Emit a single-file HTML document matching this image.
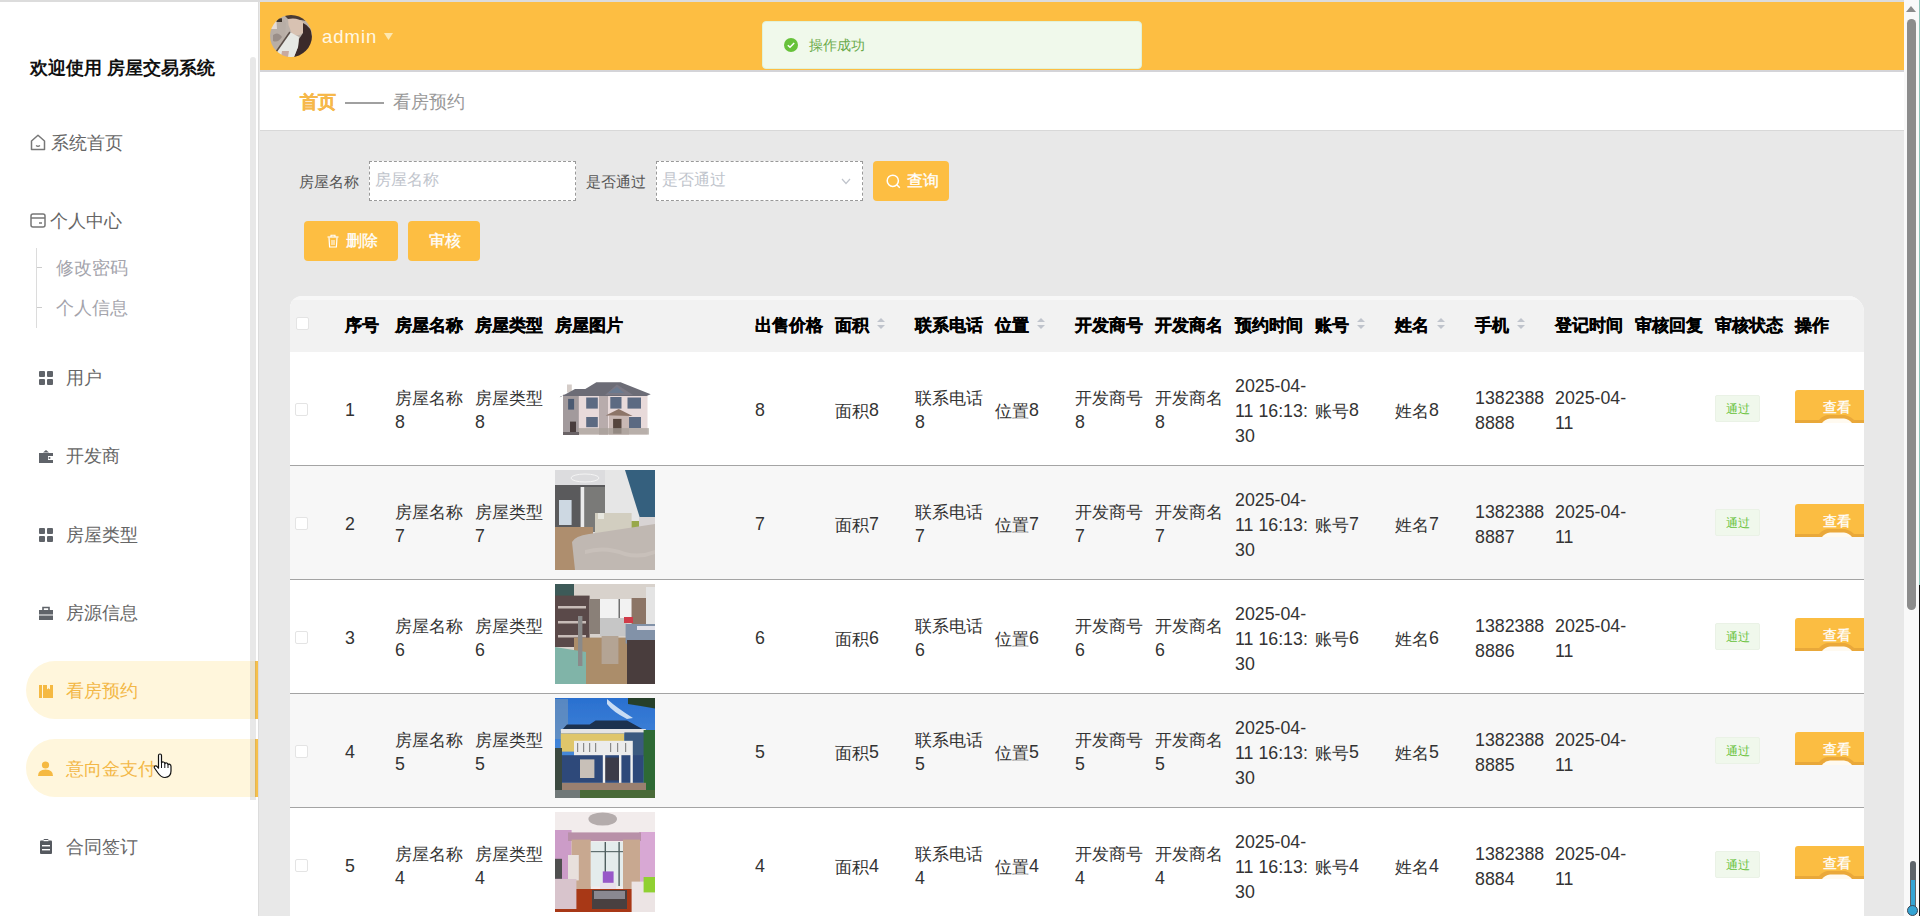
<!DOCTYPE html><html><head><meta charset="utf-8"><style>
*{box-sizing:border-box;margin:0;padding:0}
html,body{width:1920px;height:916px;overflow:hidden}
body{position:relative;background:#e8e8e8;font-family:"Liberation Sans",sans-serif;color:#333}
.abs{position:absolute}
.t{position:absolute;white-space:nowrap;line-height:1}
#topline{left:0;top:0;width:1920px;height:2px;background:#dcdcdc}
#side{left:0;top:2px;width:258px;height:914px;background:#fff}
#sideedge{left:258px;top:2px;width:1px;height:914px;background:#dcdcdc}
#sidescroll{left:250px;top:57px;width:6px;height:743px;border-radius:3px 3px 0 0;background:rgba(140,140,140,0.2)}
.menu{position:absolute;left:30px;font-size:18px;color:#666;white-space:nowrap;line-height:1}
.pill{position:absolute;left:26px;width:232px;height:58px;border-radius:29px 0 0 29px;background:#fff6dc;border-right:3px solid #f7c04a}
#header{left:260px;top:2px;width:1644px;height:68px;background:#fdbe42}
#hline{left:260px;top:70px;width:1644px;height:2px;background:#d4d4d8}
#crumb{left:260px;top:72px;width:1644px;height:58px;background:#fff}
#cline{left:260px;top:130px;width:1644px;height:1px;background:#d8d8d8}
#vscroll{left:1904px;top:0;width:16px;height:916px;background:#f9f9f9}
.btn{position:absolute;height:40px;top:0;background:#fdbe42;border-radius:4px;color:#fff;font-size:16px}
.th{position:absolute;top:317.5px;font-size:16.6px;font-weight:bold;color:#000;white-space:nowrap;line-height:1;-webkit-text-stroke:0.35px #000}
.td{position:absolute;font-size:16.8px;color:#333;line-height:24px;white-space:nowrap}
.n{font-size:17.8px}
.c{position:relative;top:1px}
.cb{position:absolute;left:296px;width:13px;height:13px;background:#fff;border:1px solid #e4e4e4;border-radius:2px}
.sort{position:absolute;width:10px;height:12px}
.tag{position:absolute;left:1715px;width:45px;height:27px;background:#f0f8ec;border:1px solid #eaf2e6;border-radius:2px;color:#67c23a;font-size:12px;line-height:27px;text-align:center}
</style></head><body><div id="topline" class="abs"></div>
<div id="side" class="abs"></div>
<div id="sideedge" class="abs"></div>
<div class="t" style="left:30px;top:59px;font-size:18px;font-weight:bold;color:#111">欢迎使用 房屋交易系统</div>
<div class="pill" style="top:661px"></div>
<div class="pill" style="top:739px"></div>
<div id="sidescroll" class="abs"></div>
<svg class="abs" style="left:30px;top:134px" width="16" height="17" viewBox="0 0 16 17"><path d="M1.5 7 L8 1.2 L14.5 7 V15.5 H1.5 Z" fill="none" stroke="#777" stroke-width="1.5" stroke-linejoin="round"/><path d="M6 11.5 Q8 13 10 11.5" fill="none" stroke="#777" stroke-width="1.3"/></svg>
<div class="menu" style="left:51px;top:134px">系统首页</div>
<svg class="abs" style="left:30px;top:213px" width="16" height="15" viewBox="0 0 16 15"><rect x="1" y="1" width="14" height="13" rx="2" fill="none" stroke="#777" stroke-width="1.5"/><line x1="1" y1="5" x2="15" y2="5" stroke="#777" stroke-width="1.5"/><line x1="9" y1="10" x2="12" y2="10" stroke="#777" stroke-width="1.5"/></svg>
<div class="menu" style="left:50px;top:212px">个人中心</div>
<div class="abs" style="left:36px;top:248px;width:1px;height:80px;background:#dcdcdc"></div>
<div class="abs" style="left:37px;top:267px;width:5px;height:1px;background:#ccc"></div>
<div class="abs" style="left:37px;top:307px;width:5px;height:1px;background:#ccc"></div>
<div class="menu" style="left:56px;top:259px;color:#a4a4ac">修改密码</div>
<div class="menu" style="left:56px;top:299px;color:#a4a4ac">个人信息</div>
<svg class="abs" style="left:39px;top:371px" width="14" height="14" viewBox="0 0 14 14"><rect x="0" y="0" width="6" height="6" rx="1" fill="#5f6369"/><rect x="8" y="0" width="6" height="6" rx="1" fill="#5f6369"/><rect x="0" y="8" width="6" height="6" rx="1" fill="#5f6369"/><rect x="8" y="8" width="6" height="6" rx="1" fill="#5f6369"/></svg>
<div class="menu" style="left:66px;top:369px">用户</div>
<svg class="abs" style="left:39px;top:449px" width="14" height="14" viewBox="0 0 14 14"><path d="M7 1 L10 3.5 H4 Z" fill="#5f6369"/><rect x="0" y="4" width="14" height="10" fill="#5f6369"/><rect x="9" y="7" width="5" height="4" fill="#fff"/><circle cx="10.5" cy="9" r="1" fill="#5f6369"/></svg>
<div class="menu" style="left:66px;top:447px">开发商</div>
<svg class="abs" style="left:39px;top:528px" width="14" height="14" viewBox="0 0 14 14"><rect x="0" y="0" width="6" height="6" rx="1" fill="#5f6369"/><rect x="8" y="0" width="6" height="6" rx="1" fill="#5f6369"/><rect x="0" y="8" width="6" height="6" rx="1" fill="#5f6369"/><rect x="8" y="8" width="6" height="6" rx="1" fill="#5f6369"/></svg>
<div class="menu" style="left:66px;top:526px">房屋类型</div>
<svg class="abs" style="left:39px;top:606px" width="14" height="14" viewBox="0 0 14 14"><path d="M4 4 V1.5 H10 V4" fill="none" stroke="#5f6369" stroke-width="1.6"/><rect x="0" y="4" width="14" height="4.5" fill="#5f6369"/><rect x="0" y="9.5" width="14" height="4.5" fill="#5f6369"/></svg>
<div class="menu" style="left:66px;top:604px">房源信息</div>
<svg class="abs" style="left:39px;top:684px" width="14" height="14" viewBox="0 0 14 14"><rect x="0" y="1" width="3" height="13" fill="#f5b942"/><rect x="4" y="1" width="10" height="13" fill="#f5b942"/><path d="M8 1 V5.5 L9.5 4.3 L11 5.5 V1 Z" fill="#fff6dc"/></svg>
<div class="menu" style="left:66px;top:682px;color:#f3b847">看房预约</div>
<svg class="abs" style="left:38px;top:761px" width="15" height="15" viewBox="0 0 15 15"><circle cx="7.5" cy="4" r="3.6" fill="#f5b942"/><path d="M0 15 Q0 8.5 7.5 8.5 Q15 8.5 15 15 Z" fill="#f5b942"/></svg>
<div class="menu" style="left:66px;top:760px;color:#f3b847">意向金支付</div>
<svg class="abs" style="left:40px;top:839px" width="12" height="15" viewBox="0 0 12 15"><rect x="0" y="1.5" width="12" height="13.5" rx="1" fill="#55595f"/><rect x="3.5" y="0" width="5" height="2.5" rx="1" fill="#55595f"/><rect x="3.5" y="1" width="5" height="1.2" fill="#fff"/><rect x="2" y="6" width="8" height="1.4" fill="#fff"/><rect x="2" y="10" width="8" height="1.4" fill="#fff"/></svg>
<div class="menu" style="left:66px;top:838px">合同签订</div>
<div id="header" class="abs"></div>
<div id="hline" class="abs"></div>
<div id="crumb" class="abs"></div>
<div id="cline" class="abs"></div>
<svg class="abs" style="left:270px;top:15px" width="42" height="42" viewBox="0 0 42 42">
<defs><clipPath id="av"><circle cx="21" cy="21" r="21"/></clipPath><filter id="bl" x="-10%" y="-10%" width="120%" height="120%"><feGaussianBlur stdDeviation="0.7"/></filter></defs>
<g clip-path="url(#av)"><g filter="url(#bl)">
<rect width="42" height="42" fill="#bcb2aa"/>
<path d="M0 6 L12 2 L16 8 L14 34 L0 34 Z" fill="#b8aea6"/>
<path d="M1 7 L6.5 6 L7 14 L1 14 Z" fill="#e6dcd6"/>
<path d="M6.5 3.3 L12 3.3 L12 7 L6.5 7 Z" fill="#3a302c"/>
<path d="M3 20 Q8 16 12 22 Q8 28 3 26 Z" fill="#9a8e88"/>
<path d="M14 0 H34 L36 6 L31 5 L18 4 Z" fill="#4a3a34"/>
<path d="M18 4 Q28 2 34 8 L33 18 Q28 22 22 19 L18.5 10 Z" fill="#d8c2b2"/>
<path d="M33 8 Q42 12 42 22 V42 H24 L28 32 L29 24 L33 18 Z" fill="#3a2c2a"/>
<path d="M6 37 L20 17 L29 22 L28 32 L24 42 H8 Z" fill="#e6e8e4"/>
<path d="M6 37 L20 17" stroke="#5a4e48" stroke-width="1.6"/>
<path d="M12 36 H19 L18 42 H11 Z" fill="#c8aaa0"/>
</g></g></svg>
<div class="t" style="left:322px;top:28px;font-size:18.5px;letter-spacing:1px;color:#fff8e4">admin</div>
<svg class="abs" style="left:384px;top:33px" width="9" height="7" viewBox="0 0 9 7"><path d="M0 0 H9 L4.5 7 Z" fill="#fde8b0"/></svg>
<div class="abs" style="left:762px;top:21px;width:380px;height:48px;background:#f0f9eb;border:1px solid #e1f3d8;border-radius:4px"></div>
<svg class="abs" style="left:784px;top:38px" width="14" height="14" viewBox="0 0 14 14"><circle cx="7" cy="7" r="7" fill="#67c23a"/><path d="M3.8 7.2 L6 9.3 L10.2 5" fill="none" stroke="#fff" stroke-width="1.5"/></svg>
<div class="t" style="left:809px;top:39px;font-size:13.5px;color:#6aaa4a">操作成功</div>
<div class="t" style="left:300px;top:93px;font-size:18px;font-weight:bold;color:#f6b84a;-webkit-text-stroke:0.35px #f6b84a">首页</div>
<div class="abs" style="left:345px;top:102px;width:39px;height:2px;background:#a0a0a0"></div>
<div class="t" style="left:393px;top:93px;font-size:18px;color:#999">看房预约</div>
<div class="t" style="left:299px;top:174px;font-size:15px;color:#555">房屋名称</div>
<div class="abs" style="left:369px;top:161px;width:207px;height:40px;background:#fff;border:1px dashed #999"></div>
<div class="t" style="left:375px;top:172px;font-size:16px;color:#c0c4cc">房屋名称</div>
<div class="t" style="left:586px;top:174px;font-size:15px;color:#555">是否通过</div>
<div class="abs" style="left:656px;top:161px;width:207px;height:40px;background:#fff;border:1px dashed #999"></div>
<div class="t" style="left:662px;top:172px;font-size:16px;color:#c0c4cc">是否通过</div>
<svg class="abs" style="left:841px;top:178px" width="10" height="7" viewBox="0 0 10 7"><path d="M1 1 L5 5.5 L9 1" fill="none" stroke="#c0c4cc" stroke-width="1.2"/></svg>
<div class="abs" style="left:873px;top:161px;width:76px;height:40px;background:#fdbe42;border-radius:4px"></div>
<svg class="abs" style="left:886px;top:174px" width="15" height="15" viewBox="0 0 15 15"><circle cx="6.8" cy="6.8" r="5.6" fill="none" stroke="#fff" stroke-width="1.5"/><path d="M10.8 10.8 L13.8 13.8" stroke="#fff" stroke-width="1.5"/></svg>
<div class="t" style="left:907px;top:173px;font-size:16px;color:#fff;-webkit-text-stroke:0.3px #fff">查询</div>
<div class="abs" style="left:304px;top:221px;width:94px;height:40px;background:#fdbe42;border-radius:4px"></div>
<svg class="abs" style="left:327px;top:234px" width="12" height="14" viewBox="0 0 12 14"><path d="M0.5 3 H11.5" stroke="#fff" stroke-width="1.2"/><path d="M4 3 V1.2 H8 V3" fill="none" stroke="#fff" stroke-width="1.1"/><path d="M2 3.5 L2.6 13 H9.4 L10 3.5" fill="none" stroke="#fff" stroke-width="1.2"/><path d="M5 6 V11 M7 6 V11" stroke="#fff" stroke-width="1"/></svg>
<div class="t" style="left:346px;top:233px;font-size:16px;color:#fff;-webkit-text-stroke:0.3px #fff">删除</div>
<div class="abs" style="left:408px;top:221px;width:72px;height:40px;background:#fdbe42;border-radius:4px"></div>
<div class="t" style="left:429px;top:233px;font-size:16px;color:#fff;-webkit-text-stroke:0.3px #fff">审核</div>
<div class="abs" style="left:290px;top:296px;width:1574px;height:620px;background:#fff;border-radius:12px 16px 0 0;overflow:hidden"><div class="abs" style="left:0;top:0;width:1574px;height:56px;background:#f2f2f2"></div><div class="abs" style="left:0;top:0;width:1574px;height:4px;background:#f7f7f7"></div></div>
<div class="cb" style="top:317px"></div>
<div class="th" style="left:345px">序号</div>
<div class="th" style="left:395px">房屋名称</div>
<div class="th" style="left:475px">房屋类型</div>
<div class="th" style="left:555px">房屋图片</div>
<div class="th" style="left:755px">出售价格</div>
<div class="th" style="left:835px">面积</div>
<svg class="sort" style="left:876px;top:318px" viewBox="0 0 10 12"><path d="M1 4 L5 0 L9 4 Z" fill="#c0c4cc"/><path d="M1 7 L5 11 L9 7 Z" fill="#c0c4cc"/></svg>
<div class="th" style="left:915px">联系电话</div>
<div class="th" style="left:995px">位置</div>
<svg class="sort" style="left:1036px;top:318px" viewBox="0 0 10 12"><path d="M1 4 L5 0 L9 4 Z" fill="#c0c4cc"/><path d="M1 7 L5 11 L9 7 Z" fill="#c0c4cc"/></svg>
<div class="th" style="left:1075px">开发商号</div>
<div class="th" style="left:1155px">开发商名</div>
<div class="th" style="left:1235px">预约时间</div>
<div class="th" style="left:1315px">账号</div>
<svg class="sort" style="left:1356px;top:318px" viewBox="0 0 10 12"><path d="M1 4 L5 0 L9 4 Z" fill="#c0c4cc"/><path d="M1 7 L5 11 L9 7 Z" fill="#c0c4cc"/></svg>
<div class="th" style="left:1395px">姓名</div>
<svg class="sort" style="left:1436px;top:318px" viewBox="0 0 10 12"><path d="M1 4 L5 0 L9 4 Z" fill="#c0c4cc"/><path d="M1 7 L5 11 L9 7 Z" fill="#c0c4cc"/></svg>
<div class="th" style="left:1475px">手机</div>
<svg class="sort" style="left:1516px;top:318px" viewBox="0 0 10 12"><path d="M1 4 L5 0 L9 4 Z" fill="#c0c4cc"/><path d="M1 7 L5 11 L9 7 Z" fill="#c0c4cc"/></svg>
<div class="th" style="left:1555px">登记时间</div>
<div class="th" style="left:1635px">审核回复</div>
<div class="th" style="left:1715px">审核状态</div>
<div class="th" style="left:1795px">操作</div>
<div class="abs" style="left:290px;top:352px;width:1574px;height:113px;background:#fff"></div>
<div class="abs" style="left:290px;top:465px;width:1574px;height:1px;background:#a4a4a4"></div>
<div class="cb" style="top:403.0px;left:295px"></div>
<div class="td" style="left:345px;top:398.0px"><span class="n">1</span></div>
<div class="td" style="left:395px;top:386.0px"><span class="c">房屋名称</span><br><span class="n">8</span></div>
<div class="td" style="left:475px;top:386.0px"><span class="c">房屋类型</span><br><span class="n">8</span></div>
<svg class="abs" style="left:555px;top:356px" width="100" height="100" viewBox="0 0 100 100"><defs><filter id="b0" x="0" y="0" width="100%" height="100%"><feGaussianBlur stdDeviation="0.6" edgeMode="duplicate"/></filter></defs><g filter="url(#b0)"><rect width="100" height="100" fill="#fff"/>
<rect x="12" y="28.5" width="4.8" height="8" fill="#d4ccc8"/>
<path d="M8 38.7 H92.5 V78.6 H8 Z" fill="#e8dada"/>
<rect x="8" y="38.7" width="15.8" height="40" fill="#a29a9c"/>
<rect x="44" y="38.7" width="9" height="40" fill="#b8acac"/>
<path d="M4.5 41.5 L20 33 H30.3 L41.4 26.2 H65.6 L95.7 38.2 L91.6 40 H6 Z" fill="#6c6c76"/>
<path d="M50 39 L61.9 28.5 L78 39 Z" fill="#7a7884"/>
<path d="M53 37 L61.9 31 L69.3 37 Z" fill="#6a7a90"/>
<rect x="31.2" y="41.5" width="11.6" height="11.1" fill="#5c6a82"/>
<rect x="55.3" y="41" width="11.2" height="11.6" fill="#5c6a82"/>
<rect x="72.5" y="41.5" width="13.5" height="11.1" fill="#5c6a82"/>
<rect x="13.1" y="42.9" width="6" height="10.7" fill="#4c5a72"/>
<rect x="31.2" y="61" width="11.6" height="10.2" fill="#5c6a82"/>
<rect x="72.5" y="61" width="13.5" height="11.1" fill="#5c6a82"/>
<path d="M50.7 59.6 L63.7 53.1 L77.6 60 Z" fill="#8c7468"/>
<rect x="54" y="60" width="20" height="18.6" fill="#c8b8b4"/>
<rect x="58.1" y="62.9" width="8.4" height="14.8" fill="#54443e"/>
<rect x="15" y="65.6" width="6" height="11.2" fill="#4a3c3c"/>
<rect x="22.9" y="72.1" width="71" height="6.5" fill="#a8a09a" opacity="0.75"/>
<rect x="8" y="76" width="16" height="3" fill="#6a6466"/></g></svg>
<div class="td" style="left:755px;top:398.0px"><span class="n">8</span></div>
<div class="td" style="left:835px;top:398.0px"><span class="c">面积</span><span class="n">8</span></div>
<div class="td" style="left:915px;top:386.0px"><span class="c">联系电话</span><br><span class="n">8</span></div>
<div class="td" style="left:995px;top:398.0px"><span class="c">位置</span><span class="n">8</span></div>
<div class="td" style="left:1075px;top:386.0px"><span class="c">开发商号</span><br><span class="n">8</span></div>
<div class="td" style="left:1155px;top:386.0px"><span class="c">开发商名</span><br><span class="n">8</span></div>
<div class="td" style="left:1235px;top:374.0px"><span class="n">2025-04-</span><br><span class="n">11 16:13:</span><br><span class="n">30</span></div>
<div class="td" style="left:1315px;top:398.0px"><span class="c">账号</span><span class="n">8</span></div>
<div class="td" style="left:1395px;top:398.0px"><span class="c">姓名</span><span class="n">8</span></div>
<div class="td" style="left:1475px;top:386.0px"><span class="n">1382388</span><br><span class="n">8888</span></div>
<div class="td" style="left:1555px;top:386.0px"><span class="n">2025-04-</span><br><span class="n">11</span></div>
<div class="tag" style="top:395.0px">通过</div>
<svg class="abs" style="left:1795px;top:390.0px" width="69" height="33" viewBox="0 0 69 33">
<path d="M0 3 Q0 0 3 0 H69 V33 H3 Q0 33 0 30 Z" fill="#fbbd42"/>
<rect x="0" y="30" width="69" height="3" fill="#e8a83a"/>
<path d="M22 33 Q26 26 32 25 H50 Q56 26 62 33 Z" fill="#eaa83a"/>
<path d="M27 33 Q30 29 35 28.5 H49 Q54 29 57 33 Z" fill="#fffaf0"/>
</svg>
<div class="t" style="left:1823px;top:400.5px;font-size:13.5px;color:#fff;-webkit-text-stroke:0.3px #fff">查看</div>
<div class="abs" style="left:290px;top:466px;width:1574px;height:113px;background:#f7f7f7"></div>
<div class="abs" style="left:290px;top:579px;width:1574px;height:1px;background:#a4a4a4"></div>
<div class="cb" style="top:517.0px;left:295px"></div>
<div class="td" style="left:345px;top:512.0px"><span class="n">2</span></div>
<div class="td" style="left:395px;top:500.0px"><span class="c">房屋名称</span><br><span class="n">7</span></div>
<div class="td" style="left:475px;top:500.0px"><span class="c">房屋类型</span><br><span class="n">7</span></div>
<svg class="abs" style="left:555px;top:470px" width="100" height="100" viewBox="0 0 100 100"><defs><filter id="b1" x="0" y="0" width="100%" height="100%"><feGaussianBlur stdDeviation="0.6" edgeMode="duplicate"/></filter></defs><g filter="url(#b1)"><rect width="100" height="100" fill="#dcdcde"/>
<ellipse cx="30" cy="8" rx="14" ry="4" fill="none" stroke="#f4f4f4" stroke-width="1"/>
<rect x="0" y="15" width="50" height="47" fill="#5a5a5c"/>
<rect x="29" y="17" width="26" height="45" fill="#7a7a78"/>
<rect x="4" y="30" width="12.6" height="25" fill="#cdd8e2"/>
<rect x="25.6" y="17" width="3.6" height="45" fill="#ececec"/>
<path d="M50 0 H70 L86 51.4 H50 Z" fill="#e6e6e6"/>
<path d="M70 0 H100 V51.4 H86 Z" fill="#36607e"/>
<rect x="0" y="57" width="38" height="43" fill="#ae8e6e"/>
<rect x="40" y="43" width="36.6" height="23" fill="#d2cec0"/>
<rect x="43" y="43" width="6" height="6" fill="#e8e8e0"/>
<rect x="76.6" y="51" width="10.8" height="9" fill="#98a84c"/>
<rect x="84" y="47" width="16" height="10" fill="#d8d4d4"/>
<path d="M17 72 Q20 66 34 64 L100 54 V100 H20 Z" fill="#c0b8b2"/>
<path d="M30 80 Q50 74 70 82 Q85 86 100 80 V84 Q85 90 70 86 Q50 78 30 84 Z" fill="#c8c0ba"/></g></svg>
<div class="td" style="left:755px;top:512.0px"><span class="n">7</span></div>
<div class="td" style="left:835px;top:512.0px"><span class="c">面积</span><span class="n">7</span></div>
<div class="td" style="left:915px;top:500.0px"><span class="c">联系电话</span><br><span class="n">7</span></div>
<div class="td" style="left:995px;top:512.0px"><span class="c">位置</span><span class="n">7</span></div>
<div class="td" style="left:1075px;top:500.0px"><span class="c">开发商号</span><br><span class="n">7</span></div>
<div class="td" style="left:1155px;top:500.0px"><span class="c">开发商名</span><br><span class="n">7</span></div>
<div class="td" style="left:1235px;top:488.0px"><span class="n">2025-04-</span><br><span class="n">11 16:13:</span><br><span class="n">30</span></div>
<div class="td" style="left:1315px;top:512.0px"><span class="c">账号</span><span class="n">7</span></div>
<div class="td" style="left:1395px;top:512.0px"><span class="c">姓名</span><span class="n">7</span></div>
<div class="td" style="left:1475px;top:500.0px"><span class="n">1382388</span><br><span class="n">8887</span></div>
<div class="td" style="left:1555px;top:500.0px"><span class="n">2025-04-</span><br><span class="n">11</span></div>
<div class="tag" style="top:509.0px">通过</div>
<svg class="abs" style="left:1795px;top:504.0px" width="69" height="33" viewBox="0 0 69 33">
<path d="M0 3 Q0 0 3 0 H69 V33 H3 Q0 33 0 30 Z" fill="#fbbd42"/>
<rect x="0" y="30" width="69" height="3" fill="#e8a83a"/>
<path d="M22 33 Q26 26 32 25 H50 Q56 26 62 33 Z" fill="#eaa83a"/>
<path d="M27 33 Q30 29 35 28.5 H49 Q54 29 57 33 Z" fill="#fffaf0"/>
</svg>
<div class="t" style="left:1823px;top:514.5px;font-size:13.5px;color:#fff;-webkit-text-stroke:0.3px #fff">查看</div>
<div class="abs" style="left:290px;top:580px;width:1574px;height:113px;background:#fff"></div>
<div class="abs" style="left:290px;top:693px;width:1574px;height:1px;background:#a4a4a4"></div>
<div class="cb" style="top:631.0px;left:295px"></div>
<div class="td" style="left:345px;top:626.0px"><span class="n">3</span></div>
<div class="td" style="left:395px;top:614.0px"><span class="c">房屋名称</span><br><span class="n">6</span></div>
<div class="td" style="left:475px;top:614.0px"><span class="c">房屋类型</span><br><span class="n">6</span></div>
<svg class="abs" style="left:555px;top:584px" width="100" height="100" viewBox="0 0 100 100"><defs><filter id="b2" x="0" y="0" width="100%" height="100%"><feGaussianBlur stdDeviation="0.6" edgeMode="duplicate"/></filter></defs><g filter="url(#b2)"><rect width="100" height="100" fill="#d8d2cc"/>
<rect x="0" y="0" width="19" height="15" fill="#3e5a58"/>
<rect x="0" y="11.6" width="34.6" height="51.4" fill="#5a4a48"/>
<rect x="3" y="22" width="28" height="2.5" fill="#c8bcb8"/>
<rect x="3" y="37" width="28" height="2.5" fill="#c8bcb8"/>
<rect x="3" y="51" width="28" height="2.5" fill="#c8bcb8"/>
<rect x="34.6" y="15" width="10.4" height="35" fill="#8a8078"/>
<rect x="45" y="15" width="31.6" height="19" fill="#f2f2f2"/>
<rect x="63.5" y="15" width="1.5" height="19" fill="#707070"/>
<rect x="45" y="34" width="26.8" height="18" fill="#c6c6c6"/>
<rect x="76.6" y="14" width="14.4" height="26" fill="#8c7466"/>
<rect x="91" y="3" width="9" height="41" fill="#e4e4e4"/>
<rect x="19" y="53.6" width="60" height="46.4" fill="#ab8d6b"/>
<rect x="46.6" y="52" width="16.8" height="28" fill="#b4a494"/>
<rect x="69" y="33" width="9" height="6" fill="#d03a48"/>
<rect x="70.6" y="40" width="29.4" height="19.6" fill="#8292a8"/>
<rect x="82" y="42" width="18" height="4" fill="#e0e0e8"/>
<rect x="72" y="56" width="28" height="44" fill="#4a3c3c"/>
<path d="M0 63 L31 68 V100 H0 Z" fill="#80b4a8"/>
<rect x="23" y="32" width="4.4" height="50" fill="#8a8a8a"/></g></svg>
<div class="td" style="left:755px;top:626.0px"><span class="n">6</span></div>
<div class="td" style="left:835px;top:626.0px"><span class="c">面积</span><span class="n">6</span></div>
<div class="td" style="left:915px;top:614.0px"><span class="c">联系电话</span><br><span class="n">6</span></div>
<div class="td" style="left:995px;top:626.0px"><span class="c">位置</span><span class="n">6</span></div>
<div class="td" style="left:1075px;top:614.0px"><span class="c">开发商号</span><br><span class="n">6</span></div>
<div class="td" style="left:1155px;top:614.0px"><span class="c">开发商名</span><br><span class="n">6</span></div>
<div class="td" style="left:1235px;top:602.0px"><span class="n">2025-04-</span><br><span class="n">11 16:13:</span><br><span class="n">30</span></div>
<div class="td" style="left:1315px;top:626.0px"><span class="c">账号</span><span class="n">6</span></div>
<div class="td" style="left:1395px;top:626.0px"><span class="c">姓名</span><span class="n">6</span></div>
<div class="td" style="left:1475px;top:614.0px"><span class="n">1382388</span><br><span class="n">8886</span></div>
<div class="td" style="left:1555px;top:614.0px"><span class="n">2025-04-</span><br><span class="n">11</span></div>
<div class="tag" style="top:623.0px">通过</div>
<svg class="abs" style="left:1795px;top:618.0px" width="69" height="33" viewBox="0 0 69 33">
<path d="M0 3 Q0 0 3 0 H69 V33 H3 Q0 33 0 30 Z" fill="#fbbd42"/>
<rect x="0" y="30" width="69" height="3" fill="#e8a83a"/>
<path d="M22 33 Q26 26 32 25 H50 Q56 26 62 33 Z" fill="#eaa83a"/>
<path d="M27 33 Q30 29 35 28.5 H49 Q54 29 57 33 Z" fill="#fffaf0"/>
</svg>
<div class="t" style="left:1823px;top:628.5px;font-size:13.5px;color:#fff;-webkit-text-stroke:0.3px #fff">查看</div>
<div class="abs" style="left:290px;top:694px;width:1574px;height:113px;background:#f7f7f7"></div>
<div class="abs" style="left:290px;top:807px;width:1574px;height:1px;background:#a4a4a4"></div>
<div class="cb" style="top:745.0px;left:295px"></div>
<div class="td" style="left:345px;top:740.0px"><span class="n">4</span></div>
<div class="td" style="left:395px;top:728.0px"><span class="c">房屋名称</span><br><span class="n">5</span></div>
<div class="td" style="left:475px;top:728.0px"><span class="c">房屋类型</span><br><span class="n">5</span></div>
<svg class="abs" style="left:555px;top:698px" width="100" height="100" viewBox="0 0 100 100"><defs><filter id="b3" x="0" y="0" width="100%" height="100%"><feGaussianBlur stdDeviation="0.6" edgeMode="duplicate"/></filter></defs><g filter="url(#b3)"><defs><linearGradient id="sky" x1="0" y1="0" x2="0" y2="1"><stop offset="0" stop-color="#2a70d0"/><stop offset="1" stop-color="#5a9ae0"/></linearGradient></defs>
<rect width="100" height="100" fill="url(#sky)"/>
<path d="M52 1 Q62 10 78 20 L72 21 Q58 14 52 6 Z" fill="#c8dcf4"/>
<path d="M73 0 H100 V10.4 Q86 8 73 6 Z" fill="#26402c"/>
<rect x="0" y="1" width="13" height="40" fill="#7898b8" opacity="0.6"/>
<path d="M5.8 33.2 L12 26.6 H34.6 L40.6 22.4 H72 L91 33 V35.6 H5.8 Z" fill="#1c3050"/>
<rect x="5.8" y="31" width="85" height="4.6" fill="#e4e4e4"/>
<rect x="5.8" y="35.6" width="63.6" height="18" fill="#dfc66a"/>
<rect x="69.4" y="34.4" width="21.6" height="24" fill="#3a5a80"/>
<rect x="19" y="42.8" width="58.8" height="15.6" fill="#ececec"/>
<rect x="22" y="45" width="1.2" height="9" fill="#8a8a8a"/><rect x="28" y="45" width="1.2" height="9" fill="#8a8a8a"/><rect x="34" y="45" width="1.2" height="9" fill="#8a8a8a"/><rect x="40" y="45" width="1.2" height="9" fill="#8a8a8a"/><rect x="55" y="45" width="1.2" height="9" fill="#8a8a8a"/><rect x="62" y="45" width="1.2" height="9" fill="#8a8a8a"/><rect x="70" y="45" width="1.2" height="9" fill="#8a8a8a"/>
<rect x="5.8" y="57.2" width="82.8" height="27.6" fill="#2e4a7a"/>
<rect x="25" y="61.4" width="14.4" height="18.6" fill="#c8c0b8"/>
<rect x="50" y="59.6" width="14" height="22.8" fill="#3a3a48"/>
<rect x="47.8" y="57" width="2.4" height="28" fill="#f0f0f0"/>
<rect x="64" y="57" width="2.4" height="28" fill="#f0f0f0"/>
<rect x="75.4" y="57" width="2.4" height="28" fill="#f0f0f0"/>
<rect x="88.6" y="32" width="11.4" height="67" fill="#2e6a34"/>
<rect x="0" y="50" width="7" height="50" fill="#3a4a40"/>
<rect x="7" y="84.8" width="84" height="7.2" fill="#9a8070"/>
<rect x="25" y="92" width="75" height="8" fill="#4a6a38"/>
<rect x="0" y="92" width="25" height="8" fill="#707878"/></g></svg>
<div class="td" style="left:755px;top:740.0px"><span class="n">5</span></div>
<div class="td" style="left:835px;top:740.0px"><span class="c">面积</span><span class="n">5</span></div>
<div class="td" style="left:915px;top:728.0px"><span class="c">联系电话</span><br><span class="n">5</span></div>
<div class="td" style="left:995px;top:740.0px"><span class="c">位置</span><span class="n">5</span></div>
<div class="td" style="left:1075px;top:728.0px"><span class="c">开发商号</span><br><span class="n">5</span></div>
<div class="td" style="left:1155px;top:728.0px"><span class="c">开发商名</span><br><span class="n">5</span></div>
<div class="td" style="left:1235px;top:716.0px"><span class="n">2025-04-</span><br><span class="n">11 16:13:</span><br><span class="n">30</span></div>
<div class="td" style="left:1315px;top:740.0px"><span class="c">账号</span><span class="n">5</span></div>
<div class="td" style="left:1395px;top:740.0px"><span class="c">姓名</span><span class="n">5</span></div>
<div class="td" style="left:1475px;top:728.0px"><span class="n">1382388</span><br><span class="n">8885</span></div>
<div class="td" style="left:1555px;top:728.0px"><span class="n">2025-04-</span><br><span class="n">11</span></div>
<div class="tag" style="top:737.0px">通过</div>
<svg class="abs" style="left:1795px;top:732.0px" width="69" height="33" viewBox="0 0 69 33">
<path d="M0 3 Q0 0 3 0 H69 V33 H3 Q0 33 0 30 Z" fill="#fbbd42"/>
<rect x="0" y="30" width="69" height="3" fill="#e8a83a"/>
<path d="M22 33 Q26 26 32 25 H50 Q56 26 62 33 Z" fill="#eaa83a"/>
<path d="M27 33 Q30 29 35 28.5 H49 Q54 29 57 33 Z" fill="#fffaf0"/>
</svg>
<div class="t" style="left:1823px;top:742.5px;font-size:13.5px;color:#fff;-webkit-text-stroke:0.3px #fff">查看</div>
<div class="abs" style="left:290px;top:808px;width:1574px;height:113px;background:#fff"></div>
<div class="abs" style="left:290px;top:921px;width:1574px;height:1px;background:#a4a4a4"></div>
<div class="cb" style="top:859.0px;left:295px"></div>
<div class="td" style="left:345px;top:854.0px"><span class="n">5</span></div>
<div class="td" style="left:395px;top:842.0px"><span class="c">房屋名称</span><br><span class="n">4</span></div>
<div class="td" style="left:475px;top:842.0px"><span class="c">房屋类型</span><br><span class="n">4</span></div>
<svg class="abs" style="left:555px;top:812px" width="100" height="100" viewBox="0 0 100 100"><defs><filter id="b4" x="0" y="0" width="100%" height="100%"><feGaussianBlur stdDeviation="0.6" edgeMode="duplicate"/></filter></defs><g filter="url(#b4)"><rect width="100" height="100" fill="#f2ecec"/>
<ellipse cx="47.7" cy="7" rx="14.3" ry="6.6" fill="#b4acac"/>
<rect x="0" y="18" width="16.6" height="54" fill="#cc9cc8"/>
<rect x="84" y="20" width="16" height="50" fill="#d8a8d4"/>
<rect x="13" y="20.4" width="73" height="8.6" fill="#b890a8"/>
<rect x="16.6" y="27.6" width="19.2" height="49.4" fill="#c8a890"/>
<rect x="68" y="27.6" width="17" height="49.4" fill="#c8a890"/>
<rect x="35.8" y="30" width="32.2" height="44.4" fill="#e4ecec"/>
<rect x="35.8" y="39" width="32.2" height="1.2" fill="#607070"/>
<rect x="49.6" y="30" width="1.4" height="44" fill="#506060"/>
<rect x="63.4" y="30" width="1.4" height="44" fill="#506060"/>
<rect x="47.8" y="59.4" width="10.8" height="13.6" fill="#9858c8"/>
<rect x="45" y="70.8" width="16" height="7" fill="#e8e0ec"/>
<rect x="13" y="43" width="10.8" height="25.4" fill="#e8e0dc"/>
<rect x="0" y="46.8" width="7" height="20" fill="#505050"/>
<rect x="0" y="77" width="100" height="23" fill="#a83818"/>
<rect x="0" y="67" width="21.4" height="30" fill="#d8c4cc"/>
<rect x="76.6" y="69.6" width="23.4" height="30.4" fill="#ece4e4"/>
<rect x="88.6" y="65" width="11.4" height="15.4" fill="#90d030"/>
<rect x="37" y="78" width="35" height="19" fill="#4a4040"/>
<rect x="39" y="79" width="31" height="8" fill="#8a8890"/></g></svg>
<div class="td" style="left:755px;top:854.0px"><span class="n">4</span></div>
<div class="td" style="left:835px;top:854.0px"><span class="c">面积</span><span class="n">4</span></div>
<div class="td" style="left:915px;top:842.0px"><span class="c">联系电话</span><br><span class="n">4</span></div>
<div class="td" style="left:995px;top:854.0px"><span class="c">位置</span><span class="n">4</span></div>
<div class="td" style="left:1075px;top:842.0px"><span class="c">开发商号</span><br><span class="n">4</span></div>
<div class="td" style="left:1155px;top:842.0px"><span class="c">开发商名</span><br><span class="n">4</span></div>
<div class="td" style="left:1235px;top:830.0px"><span class="n">2025-04-</span><br><span class="n">11 16:13:</span><br><span class="n">30</span></div>
<div class="td" style="left:1315px;top:854.0px"><span class="c">账号</span><span class="n">4</span></div>
<div class="td" style="left:1395px;top:854.0px"><span class="c">姓名</span><span class="n">4</span></div>
<div class="td" style="left:1475px;top:842.0px"><span class="n">1382388</span><br><span class="n">8884</span></div>
<div class="td" style="left:1555px;top:842.0px"><span class="n">2025-04-</span><br><span class="n">11</span></div>
<div class="tag" style="top:851.0px">通过</div>
<svg class="abs" style="left:1795px;top:846.0px" width="69" height="33" viewBox="0 0 69 33">
<path d="M0 3 Q0 0 3 0 H69 V33 H3 Q0 33 0 30 Z" fill="#fbbd42"/>
<rect x="0" y="30" width="69" height="3" fill="#e8a83a"/>
<path d="M22 33 Q26 26 32 25 H50 Q56 26 62 33 Z" fill="#eaa83a"/>
<path d="M27 33 Q30 29 35 28.5 H49 Q54 29 57 33 Z" fill="#fffaf0"/>
</svg>
<div class="t" style="left:1823px;top:856.5px;font-size:13.5px;color:#fff;-webkit-text-stroke:0.3px #fff">查看</div>
<div id="vscroll" class="abs"></div>
<svg class="abs" style="left:1906px;top:6px" width="10" height="6" viewBox="0 0 10 6"><path d="M0 6 L5 0 L10 6 Z" fill="#8a8a8a"/></svg>
<div class="abs" style="left:1907px;top:19px;width:9px;height:591px;border-radius:4.5px;background:#8c8c8c"></div>
<div class="abs" style="left:1919px;top:0;width:1px;height:585px;background:#8cc4b8"></div>
<div class="abs" style="left:1919px;top:585px;width:1px;height:331px;background:#111"></div>
<div class="abs" style="left:1910px;top:861px;width:6px;height:50px;border-radius:3px;background:#5e646a"></div>
<div class="abs" style="left:1911px;top:880px;width:4px;height:30px;background:#34a4d4"></div>
<div class="abs" style="left:1907px;top:905px;width:11px;height:11px;border-radius:6px;background:#34a4d4;border:1px solid #3a4858"></div>
<svg class="abs" style="left:153px;top:753px" width="20" height="26" viewBox="0 0 20 26">
<path d="M5.5 2.5 Q5.5 1 7 1 Q8.5 1 8.5 2.5 V10 Q9 8.5 10.5 9 Q11.8 9.3 11.8 10.6 Q12.5 9.5 13.8 10 Q15 10.4 15 11.7 Q15.8 10.9 16.8 11.4 Q18 12 18 13.5 V18 Q18 24 12 24.5 Q8 24.5 5 20 L1.5 15 Q0.8 13.6 2 13 Q3.3 12.4 4.5 14 L5.5 15.2 Z" fill="#fff" stroke="#111" stroke-width="1.2" stroke-linejoin="round"/>
<path d="M8.5 10 V15 M11.8 10.6 V15 M15 11.7 V15" stroke="#111" stroke-width="1"/>
</svg></body></html>
